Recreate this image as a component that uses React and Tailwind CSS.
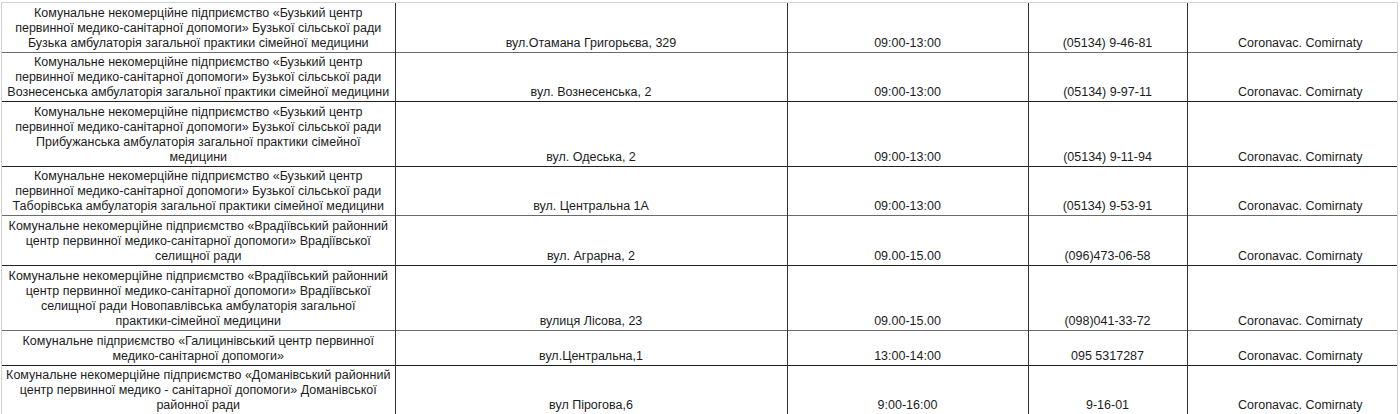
import React from 'react';

const rows = [
  {
    h: 'h-[49px]',
    line: 'border-b-[#6b6b6b]',
    name: ['Комунальне некомерційне підприємство «Бузький центр', 'первинної медико-санітарної допомоги» Бузької сільської ради', 'Бузька амбулаторія загальної практики сімейної медицини'],
    addr: 'вул.Отамана Григорьєва, 329',
    time: '09:00-13:00',
    phone: '(05134) 9-46-81',
  },
  {
    h: 'h-[49px]',
    line: 'border-b-[#222]',
    name: ['Комунальне некомерційне підприємство «Бузький центр', 'первинної медико-санітарної допомоги» Бузької сільської ради', 'Вознесенська амбулаторія загальної практики сімейної медицини'],
    addr: 'вул. Вознесенська, 2',
    time: '09:00-13:00',
    phone: '(05134) 9-97-11',
  },
  {
    h: 'h-[65px]',
    line: 'border-b-[#222]',
    name: ['Комунальне некомерційне підприємство «Бузький центр', 'первинної медико-санітарної допомоги» Бузької сільської ради', 'Прибужанська амбулаторія загальної практики сімейної', 'медицини'],
    addr: 'вул. Одеська, 2',
    time: '09:00-13:00',
    phone: '(05134) 9-11-94',
  },
  {
    h: 'h-[49px]',
    line: 'border-b-[#6b6b6b]',
    name: ['Комунальне некомерційне підприємство «Бузький центр', 'первинної медико-санітарної допомоги» Бузької сільської ради', 'Таборівська амбулаторія загальної практики сімейної медицини'],
    addr: 'вул. Центральна 1А',
    time: '09:00-13:00',
    phone: '(05134) 9-53-91',
  },
  {
    h: 'h-[50px]',
    line: 'border-b-[#222]',
    name: ['Комунальне некомерційне підприємство «Врадіївський районний', 'центр первинної медико-санітарної допомоги» Врадіївської', 'селищної ради'],
    addr: 'вул. Аграрна, 2',
    time: '09.00-15.00',
    phone: '(096)473-06-58',
  },
  {
    h: 'h-[65px]',
    line: 'border-b-[#6b6b6b]',
    name: ['Комунальне некомерційне підприємство «Врадіївський районний', 'центр первинної медико-санітарної допомоги» Врадіївської', 'селищної ради Новопавлівська амбулаторія загальної', 'практики-сімейної медицини'],
    addr: 'вулиця Лісова, 23',
    time: '09.00-15.00',
    phone: '(098)041-33-72',
  },
  {
    h: 'h-[35px]',
    line: 'border-b-[#222]',
    name: ['Комунальне підприємство «Галицинівський центр первинної', 'медико-санітарної допомоги»'],
    addr: 'вул.Центральна,1',
    time: '13:00-14:00',
    phone: '095 5317287',
  },
  {
    h: 'h-[49px]',
    line: 'border-b-[#111]',
    name: ['Комунальне некомерційне підприємство «Доманівський районний', 'центр первинної медико - санітарної допомоги» Доманівської', 'районної ради'],
    addr: 'вул Пірогова,6',
    time: '9:00-16:00',
    phone: '9-16-01',
  },
];

const cell = 'border-r border-r-[#333] align-bottom text-center px-[2px] pb-[1px]';

export default function App() {
  return (
    <div className="w-[1400px] h-[414px] bg-white overflow-hidden">
      <div className="ml-[1px] mt-[2px] w-[1397px] border-l border-t border-r border-[#d2d2d2] overflow-hidden">
        <table
          className="border-collapse table-fixed w-[1411px] text-[12.5px] leading-[15px] text-[#1c1c1c]"
          style={{ fontFamily: '"Liberation Sans", Arial, sans-serif' }}
        >
          <colgroup>
            <col className="w-[393px]" />
            <col className="w-[392px]" />
            <col className="w-[241px]" />
            <col className="w-[159px]" />
            <col className="w-[226px]" />
          </colgroup>
          <tbody>
            {rows.map((r, i) => (
              <tr key={i} className={`${r.h} border-b ${r.line}`}>
                <td className={cell}>
                  {r.name.map((l, j) => (
                    <div key={j} className="whitespace-nowrap">{l}</div>
                  ))}
                </td>
                <td className={cell}>{r.addr}</td>
                <td className={cell}>{r.time}</td>
                <td className={cell}>{r.phone}</td>
                <td className="align-bottom text-center px-[2px] pb-[1px]">Coronavac. Comirnaty</td>
              </tr>
            ))}
          </tbody>
        </table>
      </div>
    </div>
  );
}
